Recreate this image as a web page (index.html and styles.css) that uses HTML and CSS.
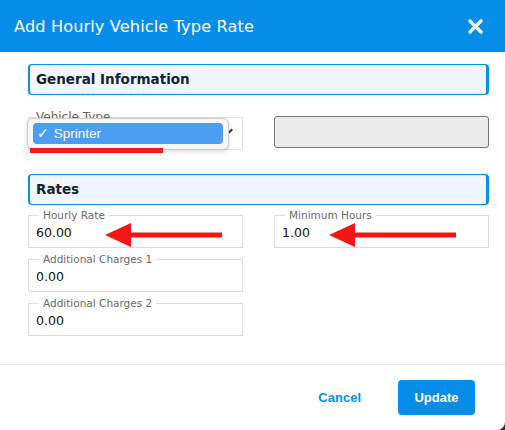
FILE: index.html
```html
<!DOCTYPE html>
<html>
<head>
<meta charset="utf-8">
<link rel="stylesheet" href="styles.css">
</head>
<body>
<div class="modal">
  <header class="modal-header">
    <h1 class="modal-title">Add Hourly Vehicle Type Rate</h1>
    <button class="close-btn" aria-label="Close">
      <svg width="15" height="15" viewBox="0 0 15 15"><path d="M2 2 L13 13 M13 2 L2 13" stroke="#fff" stroke-width="3.2" stroke-linecap="round"/></svg>
    </button>
  </header>

  <div class="modal-body">
    <section class="section">
      <h2 class="section-title">General Information</h2>
      <div class="grid grid-general">
        <div class="select-wrap">
          <fieldset class="field select-field">
            <legend class="select-legend">Vehicle Type</legend>
            <div class="select-value"></div>
            <span class="select-caret"></span>
          </fieldset>
          <div class="dropdown">
            <div class="dropdown-item"><span class="check">✓</span>Sprinter</div>
          </div>
          <div class="red-underline"></div>
        </div>
        <div class="readonly-box"></div>
      </div>
    </section>

    <section class="section rates">
      <h2 class="section-title">Rates</h2>
      <div class="grid grid-rates">
        <div class="arrow-wrap">
          <fieldset class="field">
            <legend>Hourly Rate</legend>
            <input class="field-input" type="text" value="60.00">
          </fieldset>
          <svg class="arrow arrow-hourly" width="118" height="26" viewBox="0 0 118 26"><path d="M0 13 L26 1 L26 10.5 L117 10.5 L117 15.5 L26 15.5 L26 25 Z" fill="#f51515"/></svg>
        </div>
        <div class="arrow-wrap">
          <fieldset class="field">
            <legend>Minimum Hours</legend>
            <input class="field-input" type="text" value="1.00">
          </fieldset>
          <svg class="arrow arrow-min" width="128" height="26" viewBox="0 0 128 26"><path d="M0 13 L26 1 L26 10.5 L127 10.5 L127 15.5 L26 15.5 L26 25 Z" fill="#f51515"/></svg>
        </div>
        <fieldset class="field">
          <legend>Additional Charges 1</legend>
          <input class="field-input" type="text" value="0.00">
        </fieldset>
        <div></div>
        <fieldset class="field">
          <legend>Additional Charges 2</legend>
          <input class="field-input" type="text" value="0.00">
        </fieldset>
        <div></div>
      </div>
    </section>
  </div>

  <footer class="modal-footer">
    <button class="btn btn-link">Cancel</button>
    <button class="btn btn-primary">Update</button>
  </footer>
</div>
</body>
</html>
```

FILE: styles.css
```css
* { box-sizing: border-box; }

html, body {
  margin: 0;
  padding: 0;
  background: #2e2e2e;
}

body {
  font-family: "DejaVu Sans", "Open Sans", sans-serif;
  width: 505px;
  height: 430px;
  overflow: hidden;
}

.modal {
  width: 505px;
  height: 430px;
  background: #fff;
  border-bottom-right-radius: 8px;
  display: flex;
  flex-direction: column;
}

.modal-header {
  height: 52px;
  background: #068ce9;
  display: flex;
  align-items: center;
  justify-content: space-between;
  padding: 0 22px 0 14px;
}

.modal-title {
  margin: 0;
  color: #fff;
  font-size: 16.2px;
  font-weight: 500;
  letter-spacing: 0.1px;
}

.close-btn {
  background: none;
  border: none;
  padding: 0;
  display: flex;
  margin-top: 1px;
}

.modal-body {
  flex: 1;
  padding: 12px 16px 0 28px;
}

.section-title {
  margin: 0;
  height: 31px;
  background: #eef7ff;
  border: 1px solid #0a8fe9;
  border-left-width: 2px;
  border-right-width: 3px;
  border-radius: 4px;
  color: #16222e;
  font-size: 13.5px;
  font-weight: bold;
  line-height: 29px;
  padding-left: 6px;
}

.grid {
  display: grid;
  grid-template-columns: 215px 215px;
  column-gap: 31px;
}

.grid-general {
  margin-top: 15px;
  align-items: start;
}

.select-wrap {
  position: relative;
}

.field {
  margin: 0;
  border: 1px solid #dcdcdc;
  padding: 0 7px 5px 7px;
  min-width: 0;
}

.field legend {
  margin-left: 3px;
  padding: 0 4px;
  font-size: 10.5px;
  line-height: 13px;
  color: #6a6a6a;
}

.select-field {
  border-color: #e2e2e2;
  padding: 0 7px 0 7px;
  height: 40px;
}

.select-field .select-legend {
  margin-left: 0;
  padding: 0;
  font-size: 12px;
  line-height: 14px;
  color: #666;
}

.select-caret {
  position: absolute;
  right: 10px;
  top: 20px;
  width: 5px;
  height: 2px;
  background: #333;
  transform: rotate(-45deg);
}

.dropdown {
  position: absolute;
  left: -1px;
  top: 8px;
  width: 202px;
  height: 32px;
  background: #f7f7f7;
  border: 1px solid #cfcfcf;
  border-radius: 6px;
  box-shadow: 0 1px 4px rgba(0, 0, 0, 0.18);
  padding: 4px 5px;
}

.dropdown-item {
  height: 21px;
  background: #4a9ff5;
  border-radius: 4px;
  color: #fff;
  font-family: "Liberation Sans", Arial, sans-serif;
  font-size: 13.5px;
  line-height: 21px;
  padding-left: 4px;
  display: flex;
  align-items: center;
}

.check {
  font-family: "DejaVu Sans", sans-serif;
  font-size: 14px;
  margin-right: 5px;
}

.red-underline {
  position: absolute;
  left: 2px;
  top: 38px;
  width: 133px;
  height: 5px;
  background: #ff1616;
}

.readonly-box {
  margin-top: 6px;
  height: 32px;
  background: #ebebeb;
  border: 1px solid #777;
  border-radius: 3px;
}

.rates {
  margin-top: 24px;
}

.grid-rates {
  margin-top: 4px;
  row-gap: 5px;
}

.field-input {
  display: block;
  width: 100%;
  height: 20px;
  border: none;
  background: transparent;
  padding: 0;
  font-family: "DejaVu Sans", sans-serif;
  font-size: 12.5px;
  color: #111;
  outline: none;
}

.arrow-wrap {
  position: relative;
}

.arrow {
  position: absolute;
  display: block;
}

.arrow-hourly {
  left: 77px;
  top: 13px;
}

.arrow-min {
  left: 55px;
  top: 13px;
}

.modal-footer {
  height: 66px;
  border-top: 1px solid #ececec;
  display: flex;
  align-items: center;
  justify-content: flex-end;
  padding: 0 30px 0 0;
  gap: 37px;
}

.btn {
  font-family: "Liberation Sans", Arial, sans-serif;
  font-size: 13px;
  font-weight: bold;
  border: none;
  cursor: pointer;
}

.btn-link {
  background: none;
  color: #0a8fe9;
  padding: 0;
}

.btn-primary {
  background: #068ce9;
  color: #fff;
  width: 77px;
  height: 35px;
  border-radius: 4px;
}
```
